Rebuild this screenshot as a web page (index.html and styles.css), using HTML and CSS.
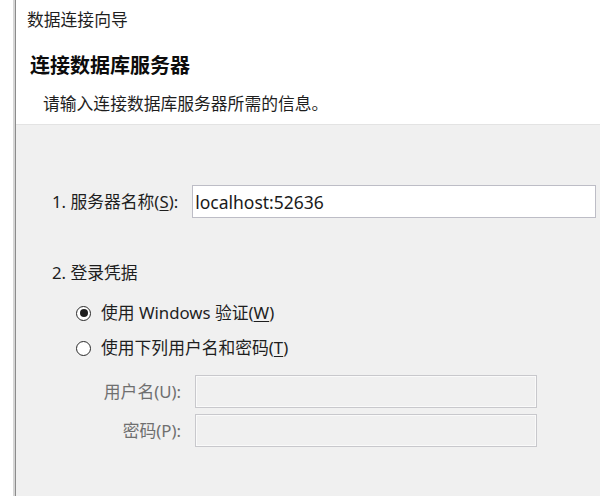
FILE: index.html
```html
<!DOCTYPE html>
<html lang="zh-CN">
<head>
<meta charset="utf-8">
<link rel="stylesheet" href="styles.css">
</head>
<body>
<div class="frame">
  <div class="gutter"></div>
  <div class="strip"></div>
  <div class="edge"></div>
  <div class="dialog">
    <header class="head">
      <div class="title">数据连接向导</div>
      <div class="heading">连接数据库服务器</div>
      <div class="sub">请输入连接数据库服务器所需的信息。</div>
    </header>
    <main class="body">
      <div class="server-row">
        <label class="label">1. 服务器名称(<u>S</u>):</label>
        <div class="field"><span class="value">localhost:52636</span></div>
      </div>
      <div class="section">2. 登录凭据</div>
      <div class="radio-row first">
        <span class="radio checked"><span class="dot"></span></span>
        <span class="rtext">使用 Windows 验证(<u>W</u>)</span>
      </div>
      <div class="radio-row">
        <span class="radio"></span>
        <span class="rtext">使用下列用户名和密码(<u>T</u>)</span>
      </div>
      <div class="creds">
        <span class="clabel">用户名(U):</span>
        <div class="dfield"></div>
        <span class="clabel">密码(P):</span>
        <div class="dfield"></div>
      </div>
    </main>
  </div>
</div>
</body>
</html>
```
FILE: styles.css
```css
* { box-sizing: border-box; }
html, body { margin: 0; padding: 0; }
body {
  width: 600px;
  height: 496px;
  overflow: hidden;
  background: #ffffff;
  font-family: "Noto Sans", "Noto Sans CJK SC", sans-serif;
  font-size: 16.8px;
  color: #1e1e1e;
}
.frame {
  display: flex;
  height: 496px;
}
.gutter { width: 13px; background: #ffffff; }
.strip { width: 2px; background: #d6d6d6; }
.edge { width: 1px; background: #8c8c8c; }
.dialog {
  flex: 1;
  display: flex;
  flex-direction: column;
}
.head {
  height: 125px;
  background: #ffffff;
  border-bottom: 1px solid #e3e3e3;
  display: flex;
  flex-direction: column;
}
.title {
  padding-top: 8px;
  padding-left: 11px;
  line-height: 23px;
}
.heading {
  margin-top: 21px;
  padding-left: 14px;
  font-size: 20px;
  font-weight: bold;
  line-height: 28px;
  color: #0c0c0c;
}
.sub {
  margin-top: 13px;
  padding-left: 27px;
  line-height: 22px;
}
.body {
  flex: 1;
  background: #f0f0f0;
  padding: 60px 4px 0 36px;
  display: flex;
  flex-direction: column;
}
.server-row {
  display: flex;
  align-items: center;
  gap: 14px;
}
.label { line-height: 22px; white-space: nowrap; }
.field {
  flex: 1;
  height: 33px;
  background: #ffffff;
  border: 1px solid #bdbdc6;
  display: flex;
  align-items: center;
  padding-left: 2px;
}
.value {
  font-size: 17.5px;
  color: #1a1a1a;
}
.section {
  margin-top: 44px;
  line-height: 22px;
}
.radio-row {
  display: flex;
  align-items: center;
  height: 24px;
  margin-top: 11px;
  padding-left: 24px;
  gap: 10px;
}
.radio-row.first { margin-top: 17px; }
.radio {
  flex-shrink: 0;
  width: 15px;
  height: 15px;
  border-radius: 50%;
  border: 1.3px solid #2a2a2a;
  background: #ffffff;
  display: flex;
  align-items: center;
  justify-content: center;
}
.dot {
  width: 8px;
  height: 8px;
  border-radius: 50%;
  background: #1e1e1e;
}
.rtext { line-height: 22px; }
.creds {
  margin-top: 15px;
  display: grid;
  grid-template-columns: 129px 342px;
  column-gap: 14px;
  row-gap: 6px;
  align-items: center;
}
.clabel {
  text-align: right;
  color: #6f6f6f;
  line-height: 22px;
}
.dfield {
  height: 33px;
  background: #f0f0f0;
  border: 1px solid #c8c8cc;
  box-shadow: inset 0 0 0 1px #fafafa;
}
u { text-underline-offset: 2px; }
```
